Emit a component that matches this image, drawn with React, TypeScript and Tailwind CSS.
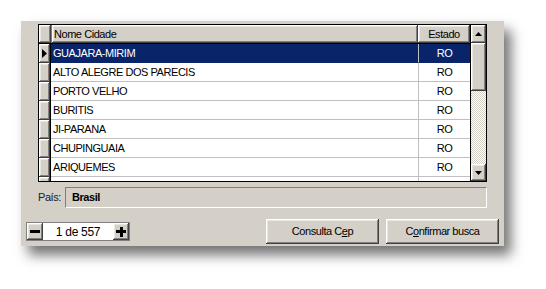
import React from 'react';

const raised =
  'bg-[#d4d0c8] shadow-[inset_-1px_-1px_#404040,inset_1px_1px_#ffffff,inset_-2px_-2px_#808080,inset_2px_2px_#e8e6e1]';

const cities = [
  'GUAJARA-MIRIM',
  'ALTO ALEGRE DOS PARECIS',
  'PORTO VELHO',
  'BURITIS',
  'JI-PARANA',
  'CHUPINGUAIA',
  'ARIQUEMES',
  '',
];

const Arrow = ({ up }: { up?: boolean }) => (
  <svg width="7" height="4" viewBox="0 0 7 4">
    {up ? <polygon points="0,4 7,4 3.5,0" fill="#000" /> : <polygon points="0,0 7,0 3.5,4" fill="#000" />}
  </svg>
);

export default function App() {
  return (
    <div
      className="w-[546px] h-[289px] bg-white overflow-hidden pt-[21px] pl-[21px] text-[11px] tracking-[-0.45px] text-black"
      style={{ fontFamily: '"Liberation Sans", Arial, sans-serif' }}
    >
      <div className="w-[483px] h-[225px] bg-[#d4d0c8] shadow-[7px_9px_12px_rgba(0,0,0,0.55)] flex flex-col">
        {/* grid */}
        <div className="ml-[17px] mt-[3px] w-[449px] h-[158px] border border-black flex overflow-hidden">
          <div className="flex-1 flex flex-col overflow-hidden">
            {/* header */}
            <div className="h-[19px] flex shrink-0 border-b border-black">
              <div className={`w-[12px] h-[18px] ${raised} shrink-0`} />
              <div className={`flex-1 h-[18px] ${raised} flex items-center pl-[2px] border-l border-[#808080]`}>
                Nome Cidade
              </div>
              <div className={`w-[52px] h-[18px] ${raised} flex items-center justify-center`}>Estado</div>
            </div>
            {cities.map((c, i) => {
              const sel = i === 0;
              return (
                <div key={i} className="h-[19px] flex shrink-0">
                  <div className={`w-[12px] h-[19px] ${raised} shrink-0 flex items-center justify-center border-r border-black`}>
                    {sel && (
                      <svg width="5" height="9" viewBox="0 0 5 9">
                        <polygon points="0,0 5,4.5 0,9" fill="#000" />
                      </svg>
                    )}
                  </div>
                  <div
                    className={`flex-1 h-[19px] flex items-center pl-[2px] border-b ${
                      sel ? 'bg-[#0a246a] text-white border-[#0a246a]' : 'bg-white border-[#c0c0c0]'
                    }`}
                  >
                    {c}
                  </div>
                  <div
                    className={`w-[52px] h-[19px] flex items-center justify-center border-b border-l ${
                      sel ? 'bg-[#0a246a] text-white border-b-[#0a246a] border-l-[#c0c0c0]' : 'bg-white border-[#c0c0c0]'
                    }`}
                  >
                    {c ? 'RO' : ''}
                  </div>
                </div>
              );
            })}
          </div>
          {/* scrollbar */}
          <div className="w-[16px] flex flex-col shrink-0 border-l border-black">
            <div className={`h-[18px] ${raised} flex items-center justify-center shrink-0`}>
              <Arrow up />
            </div>
            <div className={`h-[48px] ${raised} shrink-0`} />
            <div className="flex-1 bg-[repeating-conic-gradient(#ffffff_0_25%,#d4d0c8_0_50%)] bg-[length:2px_2px]" />
            <div className={`h-[17px] ${raised} flex items-center justify-center shrink-0`}>
              <Arrow />
            </div>
          </div>
        </div>

        {/* País */}
        <div className="flex items-center mt-[5px] ml-[17px]">
          <span className="w-[27px] text-[#202020]">País:</span>
          <div className="w-[422px] h-[21px] border border-t-[#808080] border-l-[#808080] border-r-white border-b-white flex items-center pl-[6px] font-bold">
            Brasil
          </div>
        </div>

        {/* bottom row */}
        <div className="flex items-center mt-[11px] ml-[5px]">
          <div className="flex h-[19px] border border-[#808080]">
            <div className={`w-[16px] h-full ${raised} flex items-center justify-center`}>
              <div className="w-[10px] h-[3px] bg-black" />
            </div>
            <div className="w-[70px] h-full bg-white flex items-center justify-center text-[12px] tracking-[-0.3px]">1 de 557</div>
            <div className={`w-[16px] h-full ${raised} flex items-center justify-center relative`}>
              <div className="w-[10px] h-[3px] bg-black" />
              <div className="absolute w-[3px] h-[10px] bg-black" />
            </div>
          </div>
          <button className={`ml-[136px] w-[113px] h-[25px] ${raised} flex items-center justify-center`}>
            Consulta C<span className="underline">e</span>p
          </button>
          <button className={`ml-[7px] w-[113px] h-[25px] ${raised} flex items-center justify-center`}>
            C<span className="underline">o</span>nfirmar busca
          </button>
        </div>
      </div>
    </div>
  );
}
